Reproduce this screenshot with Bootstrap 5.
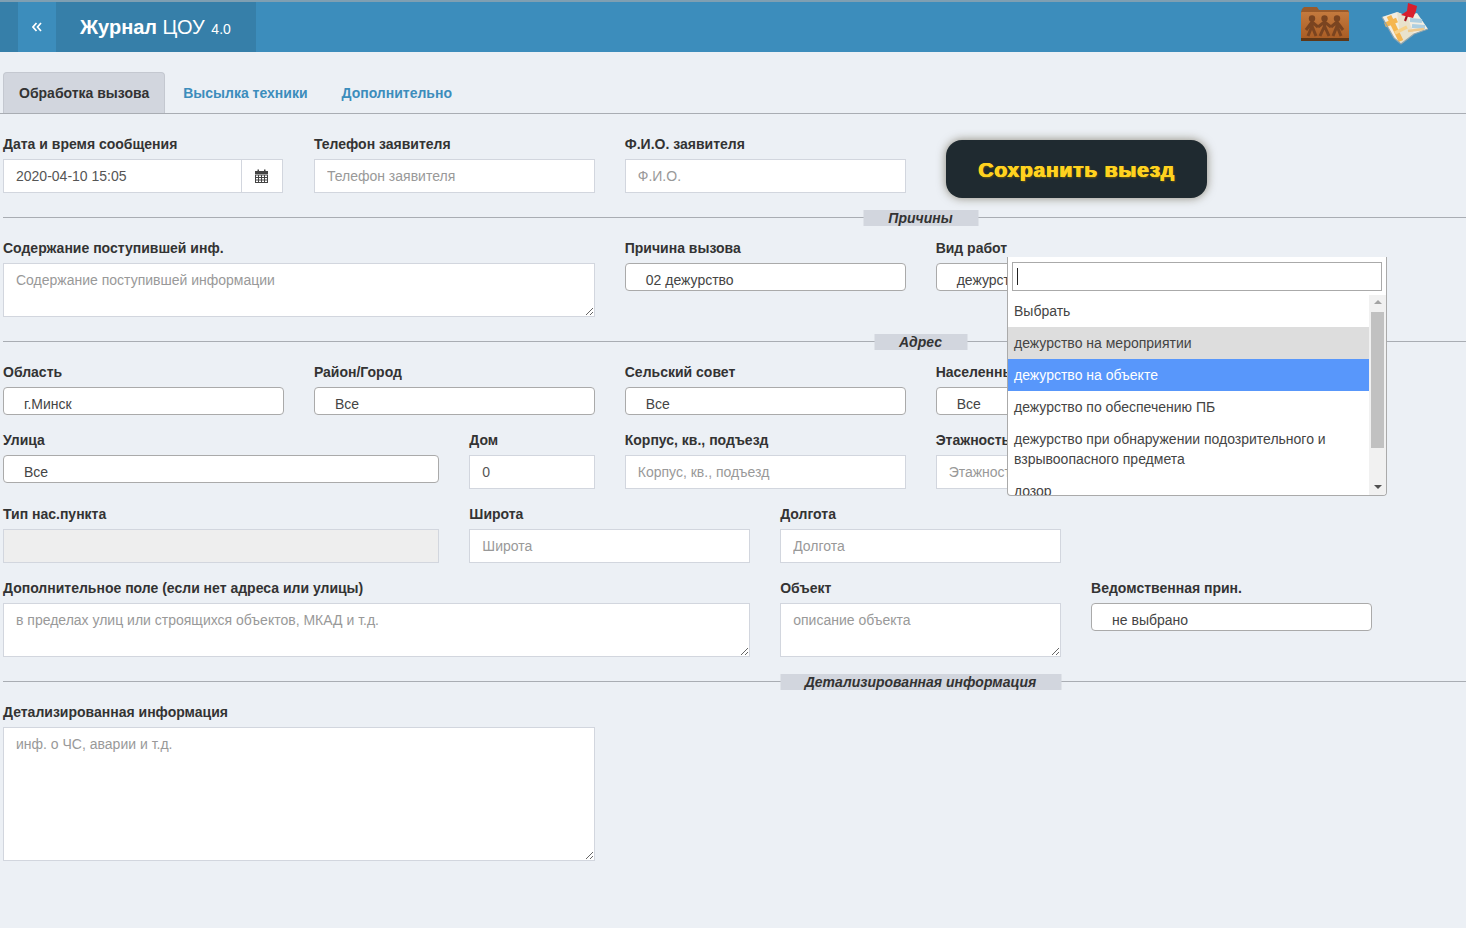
<!doctype html>
<html lang="ru">
<head>
<meta charset="utf-8">
<title>Журнал ЦОУ 4.0</title>
<link rel="stylesheet" href="https://cdn.jsdelivr.net/npm/bootstrap@5.3.0/dist/css/bootstrap.min.css">
<style>
html, body { overflow: hidden; height: 100%; }
body { background: #ecf0f5; font-family: "Liberation Sans", Arial, sans-serif; font-size: 14px; color: #333; }

.top-bar { height: 52px; background: #3c8dbc; border-top: 2px solid #7f9fb2; }
.top-side { width: 18px; background: #367fa9; }
.top-toggle { width: 38px; background: #3c8dbc; }
.top-logo { width: 200px; background: #367fa9; color: #fff; font-size: 20px; line-height: 50px; padding-left: 24px; }
.top-logo small { font-size: 14px; margin-left: 1px; }
.top-icons { gap: 31px; padding-right: 37px; padding-top: 0; }
.top-icons svg { filter: blur(.45px); }

.tab-strip { margin-top: 20px; padding-left: 3px; border-bottom: 1px solid #a9adb3; height: 42px; }
.tab-strip .nav-link { height: 41px; padding: 0 16px; line-height: 43px; font-weight: 700; color: #3c8dbc; border: 0; border-radius: 4px 4px 0 0; margin-right: 2px; }
.tab-strip .nav-link.active { background: #d2d6de; color: #333; border: 1px solid #c4c8d0; border-bottom: 0; padding: 0 15px; line-height: 41px; }

.form-wrap { width: 1213.5px; margin-left: 3px; }
.form-wrap .row { --bs-gutter-x: 30px; --bs-gutter-y: 0; }
.w-1u { flex: 0 0 auto; width: 12.5%; }
.w-3u { flex: 0 0 auto; width: 37.5%; }
.w-5u { flex: 0 0 auto; width: 62.5%; }
.field-lbl { display: block; font-weight: 700; font-size: 14px; line-height: 20px; margin: 0 0 5px; color: #333; white-space: nowrap; }
.form-control { height: 34px; border-radius: 0; border: 1px solid #d2d6de; padding: 6px 12px; font-size: 14px; color: #555; line-height: 20px; box-shadow: none; }
.form-control::placeholder { color: #999; opacity: 1; }
.form-control:disabled { background: #eee; }
textarea.form-control { display: block; }
.h-54 { height: 54px; }
.h-134 { height: 134px; }
.date-group { width: calc(100% - 1px); }
.input-group-text { background: #fff; border-radius: 0; border: 1px solid #d2d6de; border-left: 0; width: 42px; padding: 0; justify-content: center; }
.pick-box { height: 28px; background: #fff; border: 1px solid #aaa; border-radius: 4px; padding: 6px 20px 0; line-height: 20px; color: #444; overflow: hidden; white-space: nowrap; }

.save-btn { display: block; width: 261px; height: 58px; margin: 6px 0 0 10px; padding: 1px 0 0 1px; background: #1f2a30; color: #ffd21f; border: 0; border-radius: 16px; font-size: 21px; font-weight: 700; box-shadow: 0 0 10px rgba(60,50,20,.55); text-shadow: .6px 0 0 #ffd21f, -.6px 0 0 #ffd21f, 1px 1px 2px #6b5a10; letter-spacing: .8px; }
.save-btn:hover, .save-btn:active { background: #1f2a30 !important; color: #ffd21f !important; }

.sep-line { position: relative; border-top: 1px solid #a9adb3; margin-left: 3px; }
.sep-tag { position: absolute; left: 917.5px; top: -8px; transform: translateX(-50%); height: 16px; line-height: 16px; background: #d2d6de; font-weight: 700; font-style: italic; text-align: center; white-space: nowrap; color: #333; }
.sep-1 { margin-top: 19px; }
.tag-1 { width: 115px; }
.tag-2 { width: 93px; }
.tag-3 { width: 281px; }

.row-a { padding-top: 20px; }
.row-b { padding-top: 20px; height: 123px; }
.row-c { padding-top: 20px; height: 88px; }
.row-d { height: 74px; }
.row-e { height: 74px; }
.row-g { height: 103px; }
.row-f { padding-top: 20px; }

.drop-panel { position: absolute; left: 1007px; top: 257px; width: 380px; height: 239px; background: #fff; border: 1px solid #aaa; border-top: 0; border-radius: 0 0 4px 4px; overflow: hidden; z-index: 10; }
.drop-search { margin: 5px 4px 4px 4px; height: 29px; border: 1px solid #aaa; display: flex; align-items: center; padding-left: 4px; }
.drop-search span { width: 1px; height: 17px; background: #222; }
.drop-list { position: relative; height: 200px; overflow: hidden; }
.drop-list .list-group-item { border: 0; border-radius: 0; padding: 6px; width: 361px; line-height: 20px; font-size: 14px; color: #444; background: transparent; }
.drop-list .list-group-item.is-hover { background: #ddd; }
.drop-list .list-group-item.is-sel { background: #5897fb; color: #fff; }
.fake-scroll { position: absolute; right: 0; top: 0; bottom: 0; width: 17px; background: #f1f1f1; }
.fake-scroll i { position: absolute; left: 2px; top: 17px; width: 13px; height: 136px; background: #c1c1c1; }
.fake-scroll b { position: absolute; left: 5px; width: 0; height: 0; border: 4px solid transparent; }
.fake-scroll .arr-up { top: 5px; border-top: 0; border-bottom-color: #a3a3a3; }
.fake-scroll .arr-dn { bottom: 6px; border-bottom: 0; border-top-color: #505050; }
</style>
</head>
<body>

<header class="top-bar d-flex">
  <div class="top-side"></div>
  <div class="top-toggle d-flex align-items-center justify-content-center">
    <svg width="10" height="10" viewBox="0 0 10 10" fill="none" stroke="#fff" stroke-width="1.7"><path d="M4.5 1 L1 5 L4.5 9"/><path d="M9 1 L5.5 5 L9 9"/></svg>
  </div>
  <div class="top-logo text-nowrap"><b>Журнал</b> ЦОУ <small>4.0</small></div>
  <div class="top-icons ms-auto d-flex align-items-start">
    <svg width="50" height="44" viewBox="0 0 50 44">
      <defs>
        <linearGradient id="fold" x1="0" y1="0" x2="0" y2="1"><stop offset="0" stop-color="#c47a3e"/><stop offset="1" stop-color="#a85c24"/></linearGradient>
      </defs>
      <path d="M2 7 L4 5 H17 L19 8 H48 L49 10 V38 H1 V10 Z" fill="#9a5a2a"/>
      <rect x="1" y="10" width="48" height="27" rx="1" fill="url(#fold)"/>
      <rect x="1" y="36" width="48" height="3" fill="#5f3716"/>
      <g fill="none" stroke="#7a4420" stroke-width="3" stroke-linejoin="round">
        <path d="M8 34 L12 24 L16 34 M12 26 V19 M6 28 L12 20 L18 25"/>
        <path d="M20 34 L24.500 24 L29 34 M24.500 26 V19 M18 25 L24.500 20 L31 25"/>
        <path d="M33 34 L37 24 L41 34 M37 26 V19 M31 25 L37 20 L43 28"/>
      </g>
      <circle cx="12" cy="16.500" r="3.200" fill="#7a4420"/><circle cx="24.500" cy="16.500" r="3.200" fill="#7a4420"/><circle cx="37" cy="16.500" r="3.200" fill="#7a4420"/>
    </svg>
    <svg width="48" height="44" viewBox="0 0 48 44">
      <path d="M1 15 L16 10 L26 14 L36 11 L47 27 L33 32 L20 42 L13 36 Z" fill="#f2eee2"/>
      <path d="M16 10 L26 14 L33 32 L20 42 Z" fill="#e9e2cc"/>
      <path d="M8 14 L20 39 M4 23 L16 18" stroke="#f5b650" stroke-width="5" fill="none"/>
      <path d="M14 31 L26 25" stroke="#f7d28a" stroke-width="3.500" fill="none"/>
      <path d="M29 18 L41 19 M31 24 L44 25" stroke="#aecfe0" stroke-width="4" fill="none"/>
      <path d="M27 29 L43 27" stroke="#f0c98a" stroke-width="2.500" fill="none"/>
      <path d="M1 15 L13 36 L20 42 L33 32 L47 27" stroke="#8fa4ad" stroke-width="1.200" fill="none"/>
      <path d="M24 19 L27 11" stroke="#a3141f" stroke-width="2.200"/>
      <path d="M20 13 L26 9 L27 1 L36 4 L35 9 L32 16 Z" fill="#d81f2d"/>
    </svg>
  </div>
</header>

<ul class="nav tab-strip">
  <li class="nav-item"><a class="nav-link active" href="#">Обработка вызова</a></li>
  <li class="nav-item"><a class="nav-link" href="#">Высылка техники</a></li>
  <li class="nav-item"><a class="nav-link" href="#">Дополнительно</a></li>
</ul>

<main>
  <div class="form-wrap">
    <div class="row row-a">
      <div class="col-3">
        <label class="field-lbl">Дата и время сообщения</label>
        <div class="input-group date-group">
          <input class="form-control" value="2020-04-10 15:05">
          <span class="input-group-text">
            <svg width="13" height="14" viewBox="0 0 13 14"><path d="M0 2H2.500V0.500H4V2H9V0.500H10.500V2H13V5H0Z" fill="#444"/><path d="M0 5.500H13V14H0ZM1 6.500V8H3V6.500ZM4 6.500V8H6V6.500ZM7 6.500V8H9V6.500ZM10 6.500V8H12V6.500ZM1 9V10.500H3V9ZM4 9V10.500H6V9ZM7 9V10.500H9V9ZM10 9V10.500H12V9ZM1 11.500V13H3V11.500ZM4 11.500V13H6V11.500ZM7 11.500V13H9V11.500ZM10 11.500V13H12V11.500Z" fill="#444" fill-rule="evenodd"/></svg>
          </span>
        </div>
      </div>
      <div class="col-3">
        <label class="field-lbl">Телефон заявителя</label>
        <input class="form-control" placeholder="Телефон заявителя">
      </div>
      <div class="col-3">
        <label class="field-lbl">Ф.И.О. заявителя</label>
        <input class="form-control" placeholder="Ф.И.О.">
      </div>
      <div class="col-3">
        <button class="btn save-btn" type="button">Сохранить выезд</button>
      </div>
    </div>
  </div>

  <div class="sep-line sep-1"><div class="sep-tag tag-1">Причины</div></div>

  <div class="form-wrap">
    <div class="row row-b">
      <div class="col-6">
        <label class="field-lbl">Содержание поступившей инф.</label>
        <textarea class="form-control h-54" placeholder="Содержание поступившей информации"></textarea>
      </div>
      <div class="col-3">
        <label class="field-lbl">Причина вызова</label>
        <div class="pick-box">02 дежурство</div>
      </div>
      <div class="col-3">
        <label class="field-lbl">Вид работ</label>
        <div class="pick-box">дежурство на объекте</div>
      </div>
    </div>
  </div>

  <div class="sep-line"><div class="sep-tag tag-2">Адрес</div></div>

  <div class="form-wrap">
    <div class="row row-c">
      <div class="col-3">
        <label class="field-lbl">Область</label>
        <div class="pick-box">г.Минск</div>
      </div>
      <div class="col-3">
        <label class="field-lbl">Район/Город</label>
        <div class="pick-box">Все</div>
      </div>
      <div class="col-3">
        <label class="field-lbl">Сельский совет</label>
        <div class="pick-box">Все</div>
      </div>
      <div class="col-3">
        <label class="field-lbl">Населенный пункт</label>
        <div class="pick-box">Все</div>
      </div>
    </div>
    <div class="row row-d">
      <div class="w-3u">
        <label class="field-lbl">Улица</label>
        <div class="pick-box">Все</div>
      </div>
      <div class="w-1u">
        <label class="field-lbl">Дом</label>
        <input class="form-control" value="0">
      </div>
      <div class="col-3">
        <label class="field-lbl">Корпус, кв., подъезд</label>
        <input class="form-control" placeholder="Корпус, кв., подъезд">
      </div>
      <div class="col-3">
        <label class="field-lbl">Этажность</label>
        <input class="form-control" placeholder="Этажность">
      </div>
    </div>
    <div class="row row-e">
      <div class="w-3u">
        <label class="field-lbl">Тип нас.пункта</label>
        <input class="form-control" disabled>
      </div>
      <div class="col-3">
        <label class="field-lbl">Широта</label>
        <input class="form-control" placeholder="Широта">
      </div>
      <div class="col-3">
        <label class="field-lbl">Долгота</label>
        <input class="form-control" placeholder="Долгота">
      </div>
    </div>
    <div class="row row-g flex-nowrap">
      <div class="w-5u">
        <label class="field-lbl">Дополнительное поле (если нет адреса или улицы)</label>
        <textarea class="form-control h-54" placeholder="в пределах улиц или строящихся объектов, МКАД и т.д."></textarea>
      </div>
      <div class="col-3">
        <label class="field-lbl">Объект</label>
        <textarea class="form-control h-54" placeholder="описание объекта"></textarea>
      </div>
      <div class="col-3">
        <label class="field-lbl">Ведомственная прин.</label>
        <div class="pick-box">не выбрано</div>
      </div>
    </div>
  </div>

  <div class="sep-line"><div class="sep-tag tag-3">Детализированная информация</div></div>

  <div class="form-wrap">
    <div class="row row-f">
      <div class="col-6">
        <label class="field-lbl">Детализированная информация</label>
        <textarea class="form-control h-134" placeholder="инф. о ЧС, аварии и т.д."></textarea>
      </div>
    </div>
  </div>
</main>

<div class="drop-panel">
  <div class="drop-search"><span></span></div>
  <div class="drop-list">
    <ul class="list-group">
      <li class="list-group-item">Выбрать</li>
      <li class="list-group-item is-hover">дежурство на мероприятии</li>
      <li class="list-group-item is-sel">дежурство на объекте</li>
      <li class="list-group-item">дежурство по обеспечению ПБ</li>
      <li class="list-group-item">дежурство при обнаружении подозрительного и взрывоопасного предмета</li>
      <li class="list-group-item">дозор</li>
    </ul>
    <div class="fake-scroll"><b class="arr-up"></b><i></i><b class="arr-dn"></b></div>
  </div>
</div>

<script src="https://cdn.jsdelivr.net/npm/bootstrap@5.3.0/dist/js/bootstrap.bundle.min.js"></script>
</body>
</html>
